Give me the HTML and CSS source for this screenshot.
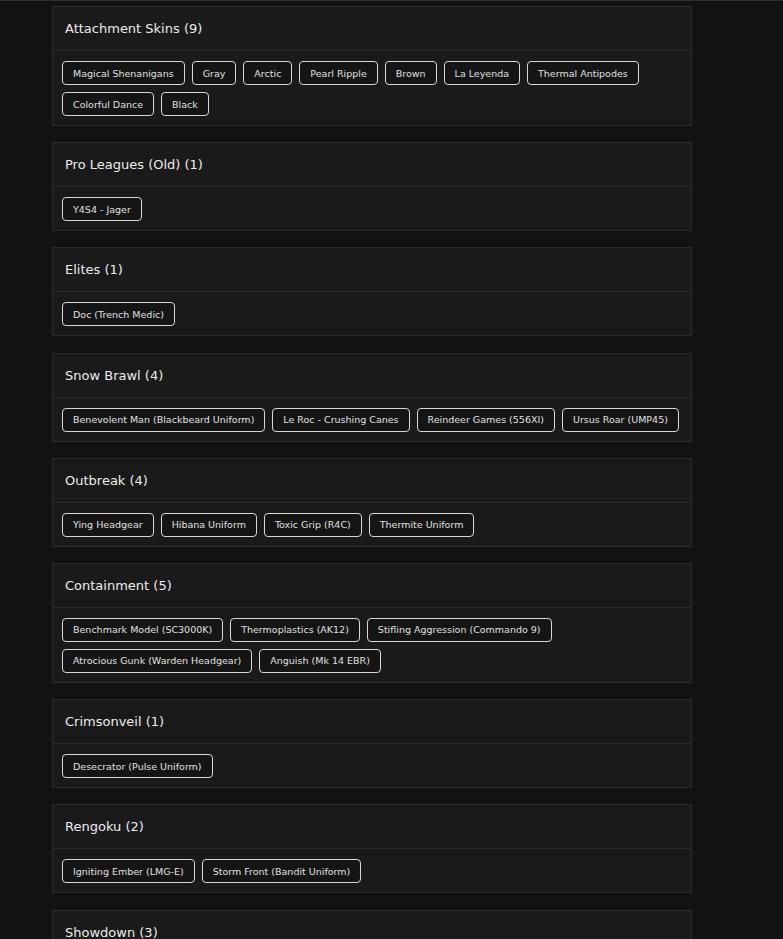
FILE: index.html
```html
<!DOCTYPE html>
<html lang="en">
<head>
<meta charset="utf-8">
<title>Skins</title>
<link rel="stylesheet" href="styles.css">
</head>
<body>
<div class="topline"></div>
<main class="list">
  <section class="card">
    <h2 class="card-title">Attachment Skins (9)</h2>
    <div class="tags">
      <span class="tag">Magical Shenanigans</span>
      <span class="tag">Gray</span>
      <span class="tag">Arctic</span>
      <span class="tag">Pearl Ripple</span>
      <span class="tag">Brown</span>
      <span class="tag">La Leyenda</span>
      <span class="tag">Thermal Antipodes</span>
      <span class="tag">Colorful Dance</span>
      <span class="tag">Black</span>
    </div>
  </section>
  <section class="card">
    <h2 class="card-title">Pro Leagues (Old) (1)</h2>
    <div class="tags">
      <span class="tag">Y4S4 - Jager</span>
    </div>
  </section>
  <section class="card">
    <h2 class="card-title">Elites (1)</h2>
    <div class="tags">
      <span class="tag">Doc (Trench Medic)</span>
    </div>
  </section>
  <section class="card">
    <h2 class="card-title">Snow Brawl (4)</h2>
    <div class="tags">
      <span class="tag">Benevolent Man (Blackbeard Uniform)</span>
      <span class="tag">Le Roc - Crushing Canes</span>
      <span class="tag">Reindeer Games (556XI)</span>
      <span class="tag">Ursus Roar (UMP45)</span>
    </div>
  </section>
  <section class="card">
    <h2 class="card-title">Outbreak (4)</h2>
    <div class="tags">
      <span class="tag">Ying Headgear</span>
      <span class="tag">Hibana Uniform</span>
      <span class="tag">Toxic Grip (R4C)</span>
      <span class="tag">Thermite Uniform</span>
    </div>
  </section>
  <section class="card">
    <h2 class="card-title">Containment (5)</h2>
    <div class="tags">
      <span class="tag">Benchmark Model (SC3000K)</span>
      <span class="tag">Thermoplastics (AK12)</span>
      <span class="tag">Stifling Aggression (Commando 9)</span>
      <span class="tag">Atrocious Gunk (Warden Headgear)</span>
      <span class="tag">Anguish (Mk 14 EBR)</span>
    </div>
  </section>
  <section class="card">
    <h2 class="card-title">Crimsonveil (1)</h2>
    <div class="tags">
      <span class="tag">Desecrator (Pulse Uniform)</span>
    </div>
  </section>
  <section class="card">
    <h2 class="card-title">Rengoku (2)</h2>
    <div class="tags">
      <span class="tag">Igniting Ember (LMG-E)</span>
      <span class="tag">Storm Front (Bandit Uniform)</span>
    </div>
  </section>
  <section class="card">
    <h2 class="card-title">Showdown (3)</h2>
    <div class="tags">
      <span class="tag">Showdown</span>
    </div>
  </section>
</main>
</body>
</html>
```
FILE: styles.css
```css
html, body {
  margin: 0;
  padding: 0;
  background: #121212;
  color: #e6e6e6;
  font-family: "DejaVu Sans", "Liberation Sans", sans-serif;
}
body {
  overflow: hidden;
  height: 939px;
}
.topline {
  height: 1px;
  background: #303030;
}
.list {
  width: 640px;
  margin-left: 52px;
  padding-top: 5px;
  display: flex;
  flex-direction: column;
  gap: 16.2px;
}
.card {
  background: #1a1a1a;
  border: 1px solid #2b2b2b;
}
.card-title {
  margin: 0;
  padding: 12px 12px;
  font-size: 13px;
  line-height: 19px;
  font-weight: normal;
  color: #ececec;
  border-bottom: 1px solid #2b2b2b;
}
.tags {
  display: flex;
  flex-wrap: wrap;
  gap: 7px 7px;
  padding: 10px 9px 9px 9px;
}
.tag {
  display: inline-flex;
  align-items: center;
  height: 22px;
  padding: 0 10px;
  border: 1px solid #d8d8d8;
  border-radius: 4px;
  background: #151515;
  font-size: 9.5px;
  color: #e0e0e0;
  white-space: nowrap;
}
```
